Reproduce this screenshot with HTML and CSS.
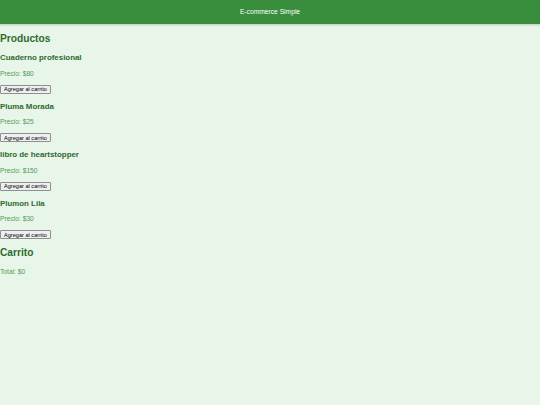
FILE: index.html
```html
<!DOCTYPE html>
<html lang="es">
<head>
<meta charset="utf-8">
<title>E-commerce Simple</title>
<link rel="stylesheet" href="styles.css">
</head>
<body>
<header class="topbar">E-commerce Simple</header>
<main class="content">
  <h2 class="section-title">Productos</h2>
  <div class="product">
    <h3 class="product-name">Cuaderno profesional</h3>
    <p class="product-price">Precio: $80</p>
    <button class="add-btn">Agregar al carrito</button>
  </div>
  <div class="product">
    <h3 class="product-name">Pluma Morada</h3>
    <p class="product-price">Precio: $25</p>
    <button class="add-btn">Agregar al carrito</button>
  </div>
  <div class="product">
    <h3 class="product-name">libro de heartstopper</h3>
    <p class="product-price">Precio: $150</p>
    <button class="add-btn">Agregar al carrito</button>
  </div>
  <div class="product">
    <h3 class="product-name">Plumon Lila</h3>
    <p class="product-price">Precio: $30</p>
    <button class="add-btn">Agregar al carrito</button>
  </div>
  <h2 class="section-title cart-title">Carrito</h2>
  <p class="product-price total">Total: $0</p>
</main>
</body>
</html>
```
FILE: styles.css
```css
html, body {
  margin: 0;
  padding: 0;
}
body {
  background: #e8f5e9;
  font-family: "Liberation Sans", Arial, sans-serif;
  min-height: 405px;
}
.topbar {
  background: #388e3c;
  color: #ffffff;
  height: 24px;
  line-height: 24px;
  text-align: center;
  font-size: 6.7px;
  box-shadow: 0 1px 2px rgba(0,0,0,0.2);
}
.content {
  padding: 0;
}
.section-title {
  color: #2e6b30;
  font-size: 10.2px;
  line-height: 14px;
  font-weight: bold;
  margin: 8px 0 6px;
}
.cart-title {
  margin-top: 6px;
  margin-bottom: 8px;
}
.product-name {
  color: #2e6b30;
  font-size: 7.9px;
  line-height: 11px;
  font-weight: bold;
  margin: 6px 0 6.5px;
}
.product-price {
  color: #4f9c53;
  font-size: 6.7px;
  line-height: 8px;
  margin: 6.5px 0 7px;
}
.total {
  margin-top: 8px;
}
.add-btn {
  display: block;
  font-family: "Liberation Sans", Arial, sans-serif;
  font-size: 5.6px;
  line-height: 6px;
  height: 9px;
  padding: 0 3px;
  margin: 0 0 7px;
  color: #000;
  background: #efefef;
  border: 1px solid #8f8f8f;
  border-radius: 1px;
}
```
